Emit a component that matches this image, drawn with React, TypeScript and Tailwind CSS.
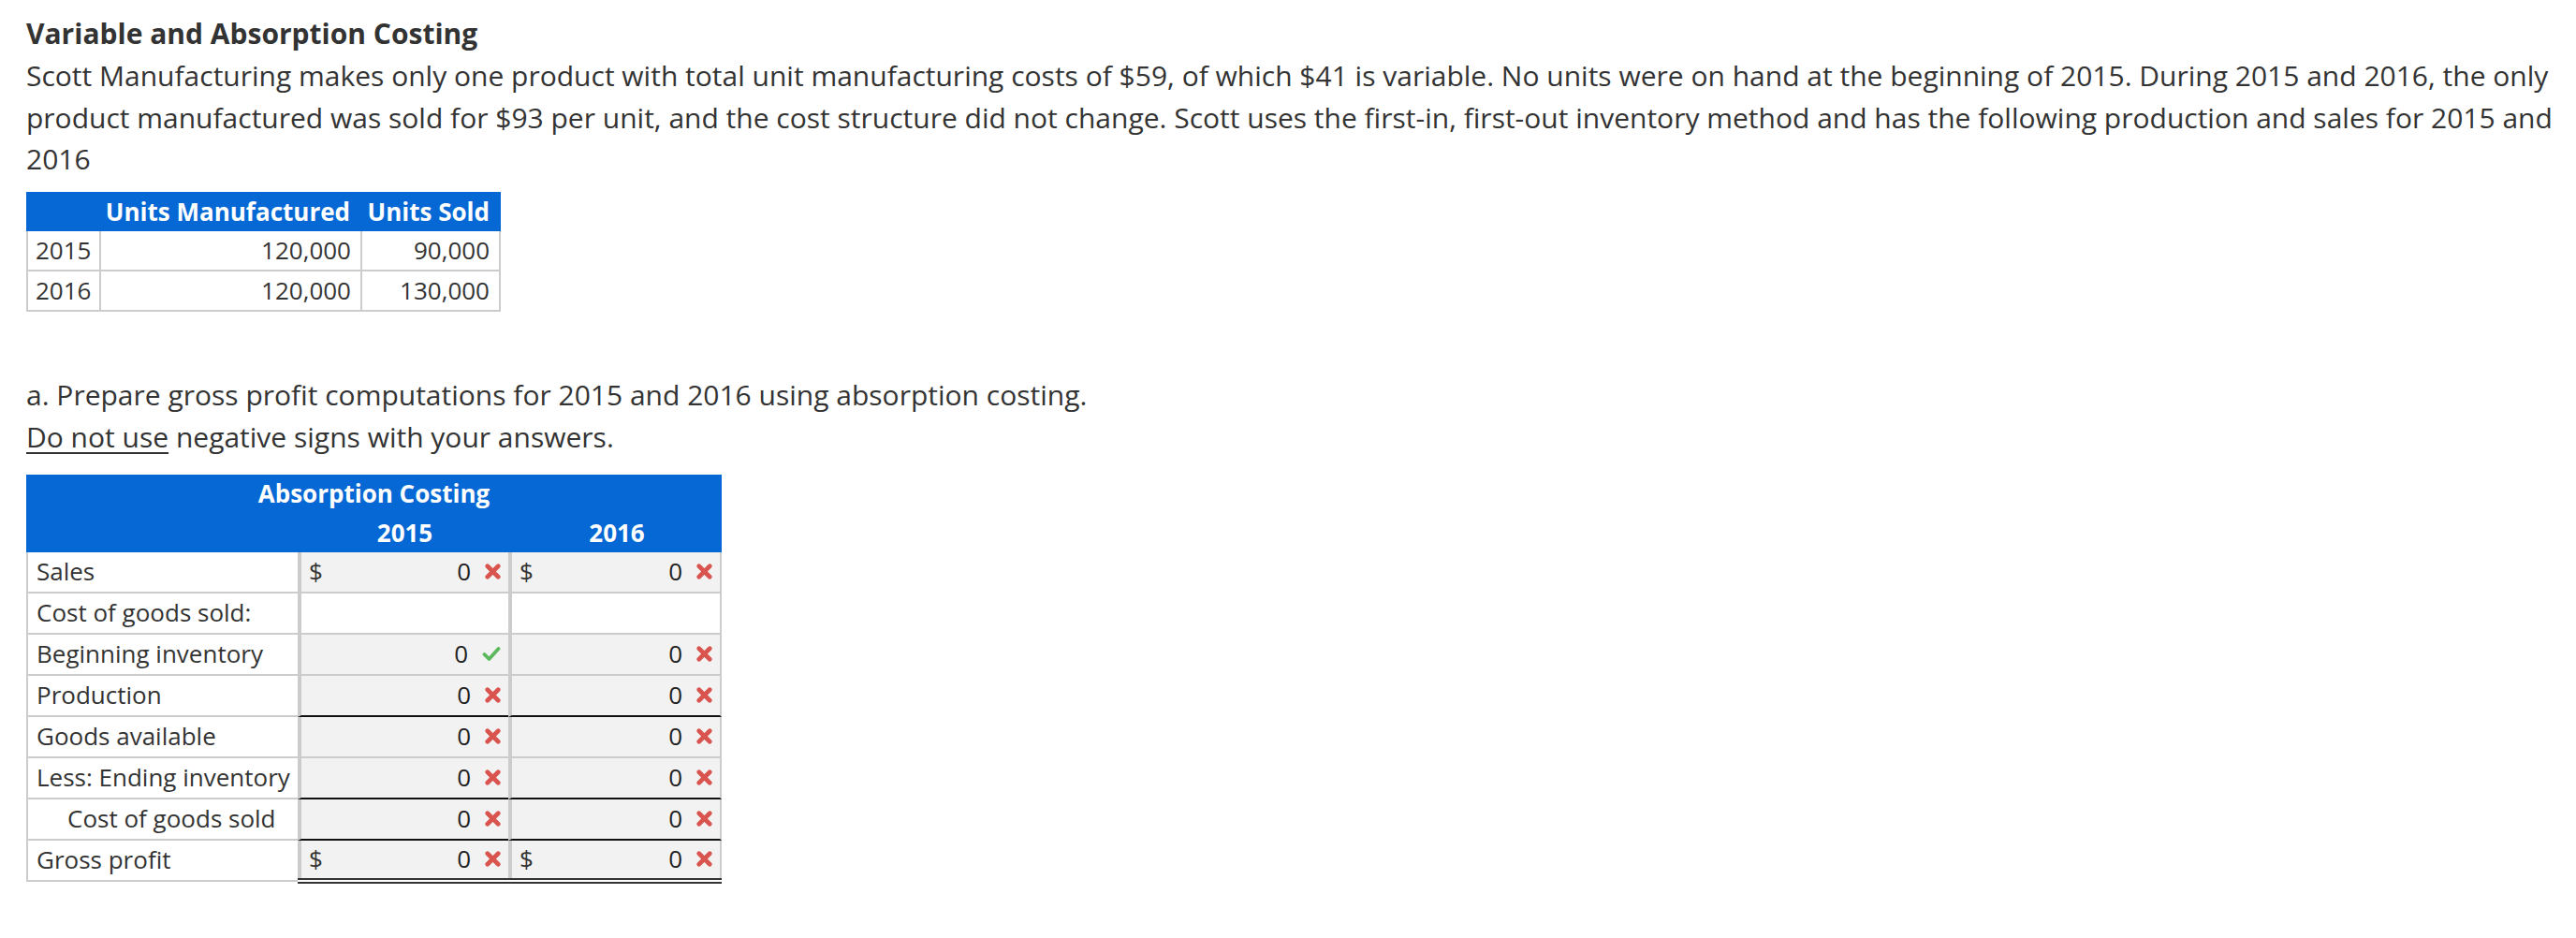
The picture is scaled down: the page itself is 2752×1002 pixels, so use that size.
import React from "react";

const XIcon = () => (
  <svg width="17" height="17" viewBox="0 0 16 16" className="shrink-0">
    <path d="M2.6 2.6 L13.4 13.4 M13.4 2.6 L2.6 13.4" stroke="#d9534f" strokeWidth="4.4" strokeLinecap="round" fill="none" />
  </svg>
);

const CheckIcon = () => (
  <svg width="20" height="17" viewBox="0 0 20 17" className="shrink-0">
    <path d="M2.5 9 L7.5 14 L17.5 3" stroke="#5cb85c" strokeWidth="3.8" strokeLinecap="round" strokeLinejoin="round" fill="none" />
  </svg>
);

type V = { dollar?: boolean; ok?: boolean } | null;

const ValueCell = ({ v, bottom, last }: { v: V; bottom: string; last?: boolean }) => (
  <div
    className={
      "flex items-center h-full border-l-[4px] border-l-[#cccccc] border-b-2 " +
      bottom +
      (last ? " border-r-2 border-r-[#cccccc]" : "") +
      (v ? " bg-[#f2f2f2]" : " bg-white")
    }
  >
    {v && (
      <>
        <span className="pl-[8px] text-[#333333] w-[30px]">{v.dollar ? "$" : ""}</span>
        <span className="flex-1 text-right text-[#222222]">0</span>
        <span className="ml-[15px] mr-[8px] flex items-center">{v.ok ? <CheckIcon /> : <XIcon />}</span>
      </>
    )}
  </div>
);

type Row = { label: string; indent?: boolean; a: V; b: V; bottom: string };

const rows: Row[] = [
  { label: "Sales", a: { dollar: true }, b: { dollar: true }, bottom: "border-b-[#cccccc]" },
  { label: "Cost of goods sold:", a: null, b: null, bottom: "border-b-[#cccccc]" },
  { label: "Beginning inventory", a: { ok: true }, b: {}, bottom: "border-b-[#cccccc]" },
  { label: "Production", a: {}, b: {}, bottom: "border-b-[#111111]" },
  { label: "Goods available", a: {}, b: {}, bottom: "border-b-[#cccccc]" },
  { label: "Less: Ending inventory", a: {}, b: {}, bottom: "border-b-[#111111]" },
  { label: "Cost of goods sold", indent: true, a: {}, b: {}, bottom: "border-b-[#111111]" },
];

export default function App() {
  return (
    <div className="min-h-screen bg-white font-['Open_Sans',sans-serif] text-[#333333] px-[28px] pt-[14px]">
      <div className="text-[30px] leading-[44.8px] font-bold whitespace-nowrap">Variable and Absorption Costing</div>
      <div className="text-[30px] leading-[44.8px] whitespace-nowrap">
        Scott Manufacturing makes only one product with total unit manufacturing costs of $59, of which $41 is variable. No units were on hand at the beginning of 2015. During 2015 and 2016, the only
        <br />
        product manufactured was sold for $93 per unit, and the cost structure did not change. Scott uses the first-in, first-out inventory method and has the following production and sales for 2015 and
        <br />
        2016
      </div>

      <div className="mt-[12px] w-[507px] text-[26px]">
        <div className="grid grid-cols-[78px_279px_150px] h-[42px] bg-[#0668d4] text-white font-bold items-center">
          <div />
          <div className="text-right pr-[11px] whitespace-nowrap">Units Manufactured</div>
          <div className="text-right pr-[12px] whitespace-nowrap">Units Sold</div>
        </div>
        {[
          ["2015", "120,000", "90,000"],
          ["2016", "120,000", "130,000"],
        ].map((r) => (
          <div key={r[0]} className="grid grid-cols-[78px_279px_150px] h-[43px]">
            <div className="border-l-2 border-b-2 border-[#cccccc] flex items-center pl-[8px]">{r[0]}</div>
            <div className="border-l-2 border-b-2 border-[#cccccc] flex items-center justify-end pr-[10px]">{r[1]}</div>
            <div className="border-l-2 border-r-2 border-b-2 border-[#cccccc] flex items-center justify-end pr-[10px]">{r[2]}</div>
          </div>
        ))}
      </div>

      <div className="mt-[67px] text-[30px] leading-[44.8px] whitespace-nowrap">
        a. Prepare gross profit computations for 2015 and 2016 using absorption costing.
        <br />
        <span className="underline underline-offset-[5px] decoration-2">Do not use</span> negative signs with your answers.
      </div>

      <div className="mt-[17px] w-[743px] text-[26px]">
        <div className="bg-[#0668d4] text-white font-bold">
          <div className="h-[42px] flex items-center justify-center">Absorption Costing</div>
          <div className="grid grid-cols-[290px_225px_228px] h-[41px] items-center">
            <div />
            <div className="text-center pl-[4px]">2015</div>
            <div className="text-center pl-[4px]">2016</div>
          </div>
        </div>
        {rows.map((r) => (
          <div key={r.label} className="grid grid-cols-[290px_225px_228px] h-[44px]">
            <div
              className={
                "border-l-2 border-b-2 border-[#cccccc] bg-white flex items-center whitespace-nowrap " +
                (r.indent ? "pl-[42px]" : "pl-[9px]")
              }
            >
              {r.label}
            </div>
            <ValueCell v={r.a} bottom={r.bottom} />
            <ValueCell v={r.b} bottom={r.bottom} last />
          </div>
        ))}
        <div className="grid grid-cols-[290px_453px] h-[46px]">
          <div className="border-l-2 border-b-2 border-[#cccccc] bg-white flex items-center pl-[9px] h-[44px]">Gross profit</div>
          <div className="border-b-[6px] border-double border-[#333333] grid grid-cols-[225px_228px] h-[46px]">
            <div className="flex items-center border-l-[4px] border-[#cccccc] bg-[#f2f2f2]">
              <span className="pl-[8px] w-[30px]">$</span>
              <span className="flex-1 text-right text-[#222222]">0</span>
              <span className="ml-[15px] mr-[8px] flex items-center"><XIcon /></span>
            </div>
            <div className="flex items-center border-l-[4px] border-r-2 border-[#cccccc] bg-[#f2f2f2]">
              <span className="pl-[8px] w-[30px]">$</span>
              <span className="flex-1 text-right text-[#222222]">0</span>
              <span className="ml-[15px] mr-[8px] flex items-center"><XIcon /></span>
            </div>
          </div>
        </div>
      </div>
    </div>
  );
}
